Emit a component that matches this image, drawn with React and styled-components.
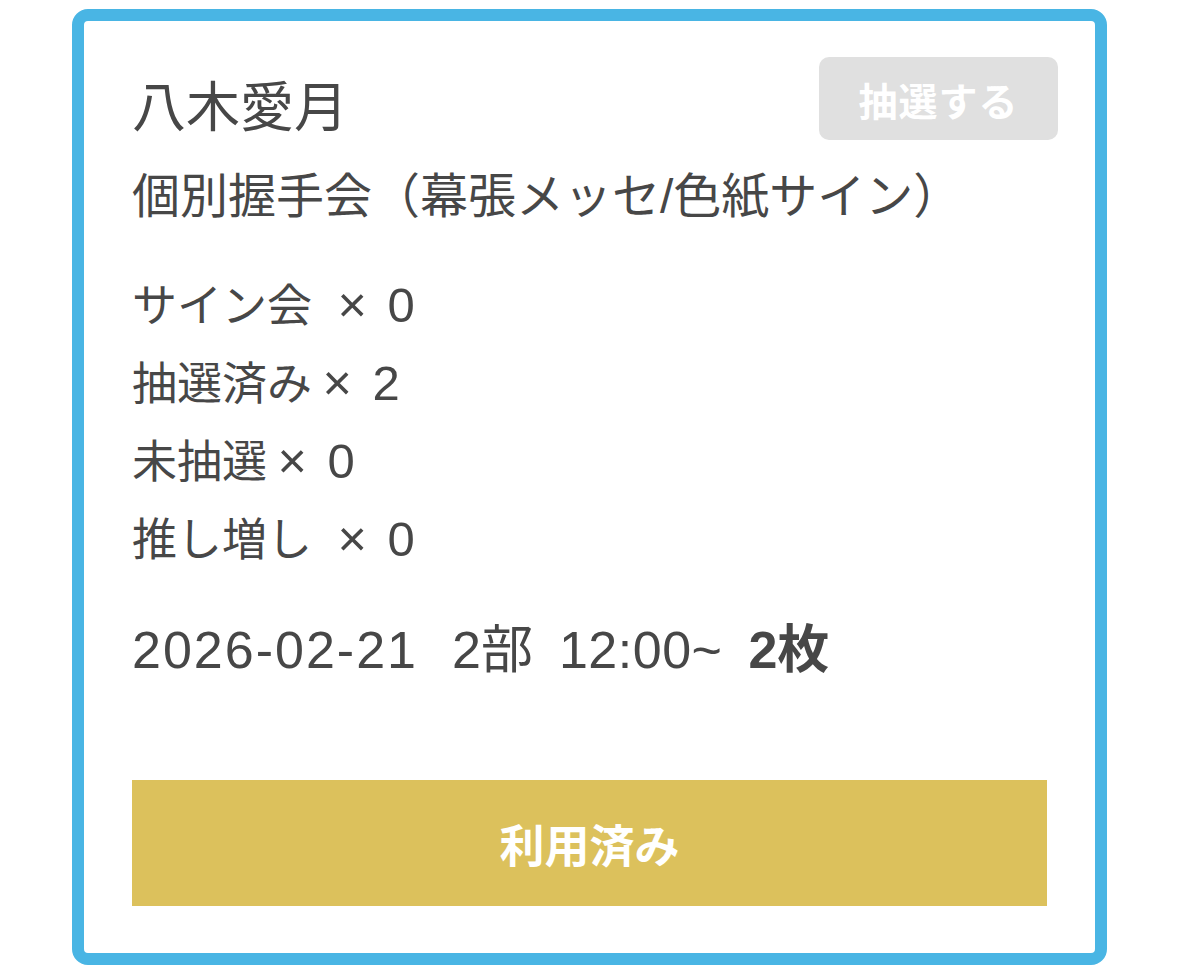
import React from "react";
import styled, { createGlobalStyle } from "styled-components";

const GlobalStyle = createGlobalStyle`
  html, body {
    margin: 0;
    padding: 0;
    background: #ffffff;
  }
  body {
    font-family: "Liberation Sans", "Noto Sans CJK JP", sans-serif;
    color: #474747;
  }
`;

const Page = styled.div`
  padding: 9px 72px 13px 72px;
`;

const Card = styled.section`
  background: #ffffff;
  border: 12px solid #49b5e4;
  border-radius: 16px;
  padding: 36px 48px 47px 48px;
`;

const Header = styled.div`
  display: flex;
  justify-content: space-between;
  align-items: flex-start;
  margin-right: -11px;
`;

const Title = styled.h1`
  margin: 0;
  padding-top: 18px;
  font-size: 54px;
  line-height: 66px;
  font-weight: 400;
`;

const DrawButton = styled.button`
  width: 239px;
  height: 83px;
  border: none;
  border-radius: 10px;
  background: #e0e0e0;
  color: #ffffff;
  font-family: "Liberation Sans", "Noto Sans CJK JP", sans-serif;
  font-size: 39px;
  font-weight: 700;
  letter-spacing: 1px;
  padding: 0;
  cursor: default;
`;

const Subtitle = styled.p`
  margin: 20px 0 0 0;
  font-size: 48px;
  line-height: 72px;
`;

const Counts = styled.div`
  margin-top: 35px;
  display: flex;
  flex-direction: column;
`;

const CountRow = styled.div`
  height: 78px;
  font-size: 45px;
  line-height: 78px;
  white-space: pre;
`;

const Times = styled.span`
  display: inline-block;
  width: 1em;
  text-align: center;
  font-size: 1.12em;
  line-height: 1;
  margin-left: ${(p) => (p.$spaced ? "15px" : "0")};
  margin-right: 10px;
`;

const CountValue = styled.span`
  font-size: 49px;
  line-height: 1;
`;

const DateRow = styled.div`
  height: 78px;
  margin-top: 31px;
  display: flex;
  align-items: baseline;
  font-size: 52px;
  line-height: 78px;
`;

const DatePart = styled.span`
  letter-spacing: ${(p) => p.$ls || "0"};
  margin-right: ${(p) => p.$gap || "0"};
  font-weight: ${(p) => (p.$bold ? 700 : 400)};
`;

const UsedButton = styled.button`
  display: block;
  width: 100%;
  height: 126px;
  margin-top: 91px;
  border: none;
  border-radius: 0;
  background: #dcc15c;
  color: #ffffff;
  font-family: "Liberation Sans", "Noto Sans CJK JP", sans-serif;
  font-size: 45px;
  font-weight: 700;
  padding: 0;
  cursor: default;
`;

const counts = [
  { label: "サイン会", spaced: true, value: "0" },
  { label: "抽選済み", spaced: false, value: "2" },
  { label: "未抽選", spaced: false, value: "0" },
  { label: "推し増し", spaced: true, value: "0" },
];

export default function App() {
  return (
    <>
      <GlobalStyle />
      <Page>
        <Card>
          <Header>
            <Title>八木愛月</Title>
            <DrawButton>抽選する</DrawButton>
          </Header>
          <Subtitle>個別握手会（幕張メッセ/色紙サイン）</Subtitle>
          <Counts>
            {counts.map((c) => (
              <CountRow key={c.label}>
                {c.label}
                <Times $spaced={c.spaced}>×</Times>
                <CountValue>{c.value}</CountValue>
              </CountRow>
            ))}
          </Counts>
          <DateRow>
            <DatePart $ls="2px" $gap="34px">2026-02-21</DatePart>
            <DatePart $gap="26px">2部</DatePart>
            <DatePart $ls="0.5px" $gap="26px">12:00~</DatePart>
            <DatePart $bold>2枚</DatePart>
          </DateRow>
          <UsedButton>利用済み</UsedButton>
        </Card>
      </Page>
    </>
  );
}
